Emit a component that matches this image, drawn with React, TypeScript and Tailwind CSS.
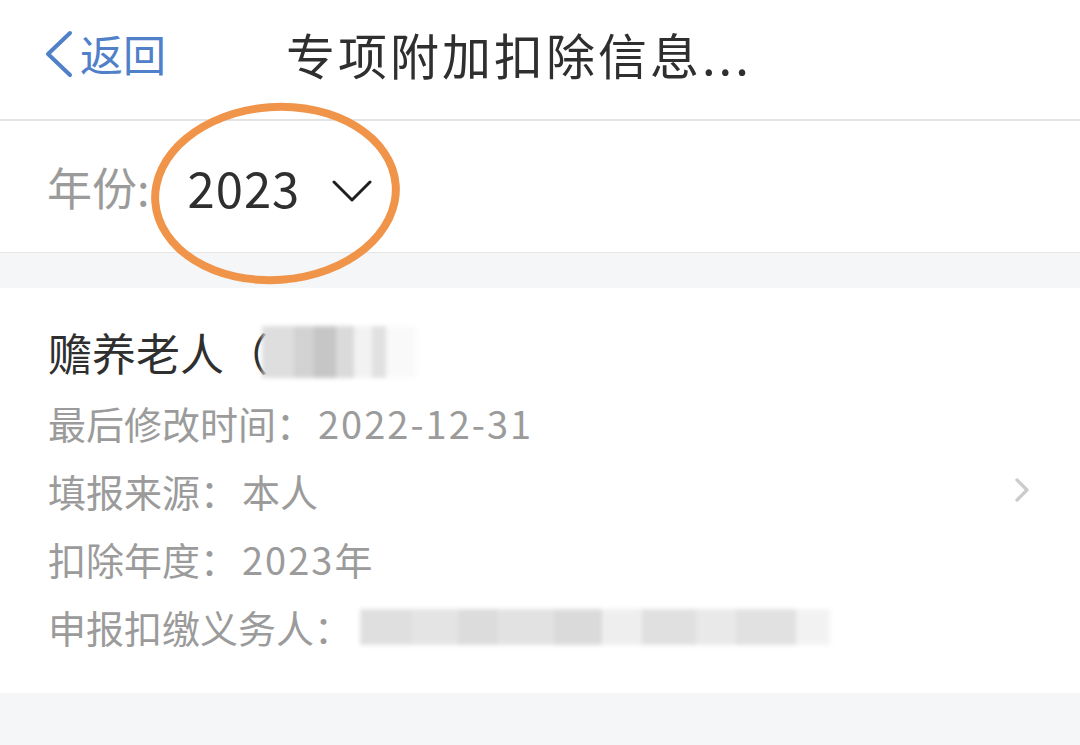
import { ChevronRight } from 'lucide-react';

const font = { fontFamily: '"Noto Sans CJK SC", "Noto Sans", sans-serif' };

function Blur({ w, tone }: { w: number; tone: string }) {
  return <div className={`h-full ${tone}`} style={{ width: w }} />;
}

function App() {
  return (
    <div className="relative w-[1080px] h-[745px] overflow-hidden bg-[#f5f6f8]" style={font}>
      {/* header */}
      <div className="h-[121px] bg-white flex items-center pb-[12px] border-b-2 border-[#e3e3e3]">
        <div className="flex items-center pl-[44px] text-[#4f80c8]">
          <svg width="30" height="48" viewBox="0 0 30 48" fill="none">
            <path d="M26 3 L4 24 L26 45" stroke="currentColor" strokeWidth="4" strokeLinecap="round" strokeLinejoin="round" />
          </svg>
          <span className="ml-[6px] text-[43px] leading-none">返回</span>
        </div>
        <div className="ml-[120px] text-[49px] leading-none text-[#2f2f2f] tracking-[3px]">
          专项附加扣除信息...
        </div>
      </div>

      {/* year selector */}
      <div className="h-[132px] bg-white flex items-center border-b border-[#e6e6e6]">
        <span className="pl-[47px] text-[45px] text-[#9b9b9b] leading-none">年份:</span>
        <span className="ml-[38px] text-[49px] text-[#2f2f2f] leading-none tracking-[1px]">2023</span>
        <svg width="40" height="22" viewBox="0 0 40 22" fill="none" className="ml-[32px] mt-[8px]">
          <path d="M2 2 L20 20 L38 2" stroke="#1f1f1f" strokeWidth="3" strokeLinecap="round" strokeLinejoin="round" />
        </svg>
      </div>

      <div className="h-[35px]" />

      {/* card */}
      <div className="h-[405px] bg-white flex items-start">
        <div className="flex-1 pl-[48px] pt-[34px]">
          <div className="flex items-center h-[60px]">
            <span className="text-[44px] leading-none text-[#2f2f2f]">赡养老人（</span>
            <div className="flex h-[52px] -ml-[6px] blur-[2px] opacity-80">
              <Blur w={32} tone="bg-[#d6d6d6]" />
              <Blur w={20} tone="bg-[#c7c7c7]" />
              <Blur w={22} tone="bg-[#b8b8b8]" />
              <Blur w={18} tone="bg-[#d2d2d2]" />
              <Blur w={18} tone="bg-[#f0f0f0]" />
              <Blur w={14} tone="bg-[#dadada]" />
              <Blur w={30} tone="bg-[#f8f8f8]" />
            </div>
          </div>
          <div className="mt-[22px] flex flex-col gap-[30px] text-[38px] leading-[38px] text-[#9b9b9b]">
            <div>最后修改时间：<span className="ml-[4px] tracking-[2px]">2022-12-31</span></div>
            <div>填报来源：<span className="ml-[4px]">本人</span></div>
            <div>扣除年度：<span className="ml-[4px] tracking-[2px]">2023</span>年</div>
            <div className="flex items-center">
              <span>申报扣缴义务人：</span>
              <div className="flex h-[36px] ml-[8px] blur-[2px] opacity-80">
                <Blur w={52} tone="bg-[#d8d8d8]" />
                <Blur w={46} tone="bg-[#dedede]" />
                <Blur w={40} tone="bg-[#d4d4d4]" />
                <Blur w={56} tone="bg-[#dcdcdc]" />
                <Blur w={48} tone="bg-[#d2d2d2]" />
                <Blur w={40} tone="bg-[#ebebeb]" />
                <Blur w={54} tone="bg-[#d9d9d9]" />
                <Blur w={40} tone="bg-[#e4e4e4]" />
                <Blur w={60} tone="bg-[#dadada]" />
                <Blur w={34} tone="bg-[#f0f0f0]" />
              </div>
            </div>
          </div>
        </div>
        <ChevronRight size={40} strokeWidth={2} className="mr-[38px] mt-[182px] text-[#cccccc]" />
      </div>

      {/* orange annotation */}
      <div className="absolute left-[151px] top-[103px] w-[249px] h-[181px] rounded-[50%] border-[8px] border-[#f0944a] -rotate-[4deg]" />
    </div>
  );
}

export default App;
